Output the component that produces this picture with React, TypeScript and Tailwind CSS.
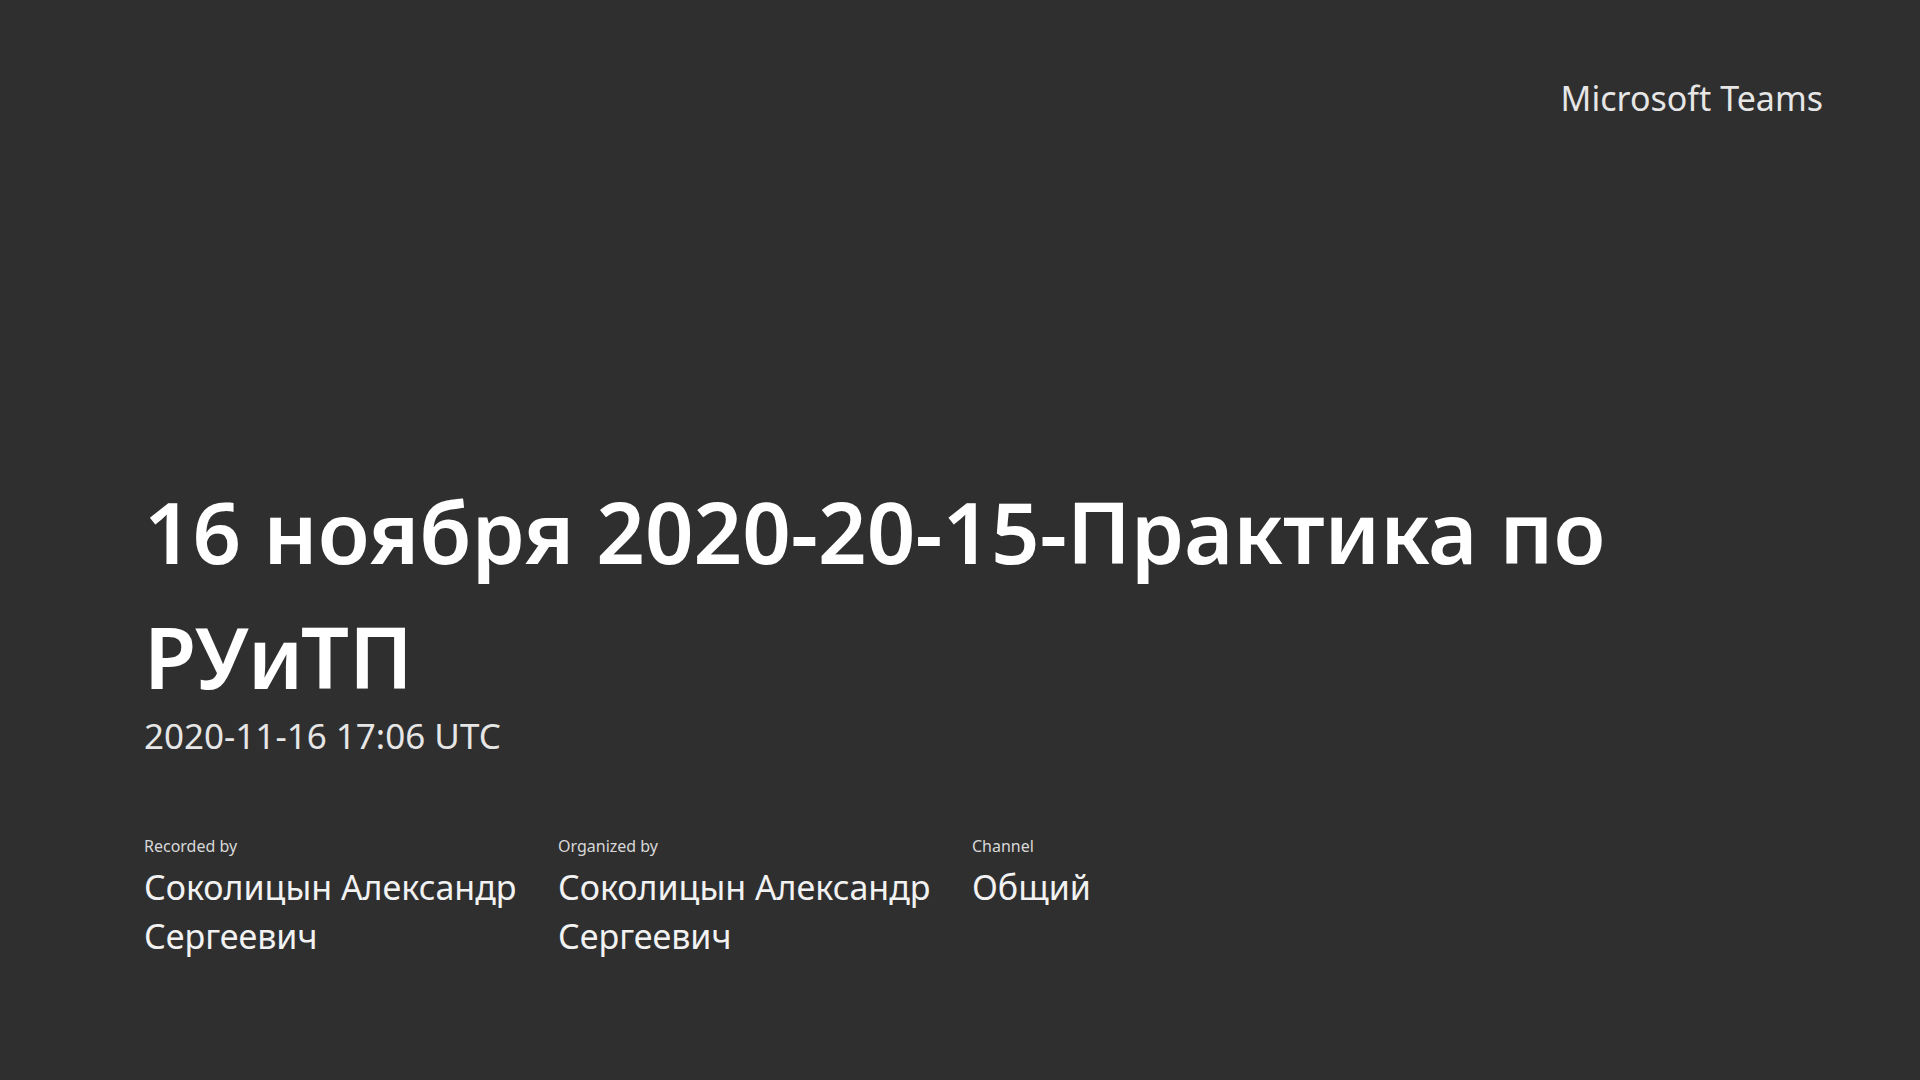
import React from "react";

const font = { fontFamily: '"Noto Sans", "Open Sans", sans-serif' };

function Field({ label, value }: { label: string; value: string }) {
  return (
    <div className="w-[414px] flex flex-col">
      <div className="text-[16px] leading-[20px] text-[#d8d8d8]">{label}</div>
      <div className="mt-[7px] text-[34px] leading-[49px] text-[#f2f2f2] pr-2">{value}</div>
    </div>
  );
}

export default function App() {
  return (
    <div className="w-full h-screen bg-[#2f2f2f] overflow-hidden flex flex-col" style={font}>
      <div className="flex justify-end pt-[76px] pr-[97px]">
        <div className="text-[34px] leading-[44px] text-[#e6e6e6]">Microsoft Teams</div>
      </div>
      <div className="pl-[144px] pt-[349px] flex flex-col">
        <h1 className="text-[85px] leading-[125px] font-semibold text-white max-w-[1520px]">
          16 ноября 2020-20-15-Практика по РУиТП
        </h1>
        <div className="text-[35px] leading-[34px] text-[#e6e6e6]">2020-11-16 17:06 UTC</div>
        <div className="flex mt-[83px]">
          <Field label="Recorded by" value="Соколицын Александр Сергеевич" />
          <Field label="Organized by" value="Соколицын Александр Сергеевич" />
          <Field label="Channel" value="Общий" />
        </div>
      </div>
    </div>
  );
}
